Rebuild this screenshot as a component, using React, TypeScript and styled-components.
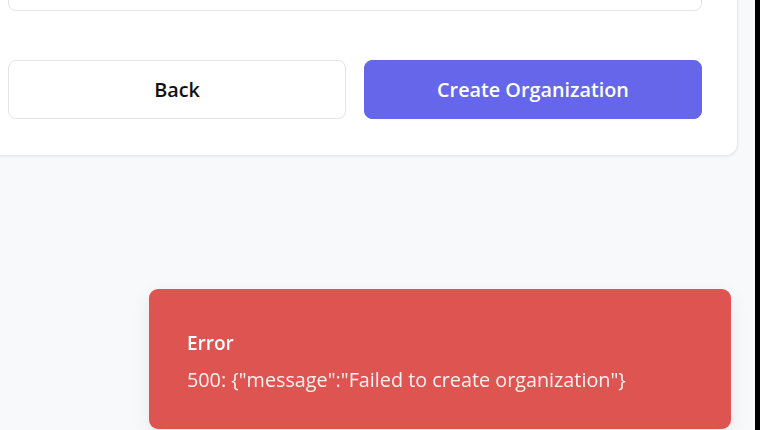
import React from "react";
import styled, { createGlobalStyle } from "styled-components";

const Global = createGlobalStyle`
  html, body { margin: 0; padding: 0; height: 430px; overflow: hidden; }
  body { background: #f8f9fb; font-family: "Open Sans", "Noto Sans", Arial, sans-serif; }
  #root { height: 430px; }
`;

const Frame = styled.div`
  display: flex;
  height: 430px;
  width: 760px;
`;

const Page = styled.main`
  width: 755px;
  height: 430px;
  background: #f8f9fb;
  overflow: hidden;
`;

const Edge = styled.div`
  width: 5px;
  height: 430px;
  background: #000;
`;

const Card = styled.section`
  box-sizing: border-box;
  margin: -73px 0 0 -28px;
  width: 766px;
  padding: 35px 35px 36px;
  background: #fff;
  border: 1px solid #e6e7ea;
  border-radius: 12px;
  box-shadow: 0 1px 3px rgba(0, 0, 0, 0.06);
`;

const Input = styled.div`
  box-sizing: border-box;
  height: 48px;
  border: 1px solid #e3e4e8;
  border-radius: 8px;
  background: #fff;
`;

const Actions = styled.div`
  display: grid;
  grid-template-columns: 1fr 1fr;
  gap: 18px;
  margin-top: 49px;
`;

const Button = styled.button<{ $primary?: boolean }>`
  box-sizing: border-box;
  height: 59px;
  border-radius: 8px;
  font-family: "Open Sans", "Noto Sans", Arial, sans-serif;
  font-size: 19.8px;
  font-weight: 600;
  cursor: pointer;
  border: 1px solid ${(p) => (p.$primary ? "#6566ea" : "#e3e4e8")};
  background: ${(p) => (p.$primary ? "#6566ea" : "#fff")};
  color: ${(p) => (p.$primary ? "#fff" : "#111")};
`;

const Toast = styled.div`
  position: fixed;
  left: 149px;
  top: 289px;
  width: 582px;
  height: 140px;
  box-sizing: border-box;
  padding: 5px 38px 0;
  display: flex;
  flex-direction: column;
  justify-content: center;
  gap: 11px;
  background: #de5450;
  border-radius: 9px;
  box-shadow: 0 6px 18px rgba(0, 0, 0, 0.08);
  color: #fff;
`;

const ToastTitle = styled.div`
  font-size: 19px;
  font-weight: 600;
  line-height: 26px;
`;

const ToastMessage = styled.div`
  font-size: 19.8px;
  line-height: 26px;
  opacity: 0.92;
`;

export default function App() {
  return (
    <>
      <Global />
      <Frame>
        <Page>
          <Card>
            <Input />
            <Actions>
              <Button>Back</Button>
              <Button $primary>Create Organization</Button>
            </Actions>
          </Card>
        </Page>
        <Edge />
      </Frame>
      <Toast role="alert">
        <ToastTitle>Error</ToastTitle>
        <ToastMessage>500: {'{"message":"Failed to create organization"}'}</ToastMessage>
      </Toast>
    </>
  );
}
